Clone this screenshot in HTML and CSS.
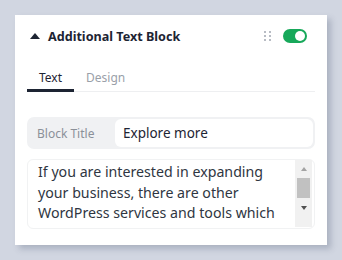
FILE: index.html
```html
<!DOCTYPE html>
<html lang="en">
<head>
  <meta charset="UTF-8">
  <title>Additional Text Block</title>
  <link rel="stylesheet" href="styles.css">
</head>
<body>

  <div class="panel">
    <!-- Cabecera del bloque -->
    <div class="panel-header">
      <span class="caret"></span>
      <h2 class="panel-title">Additional Text Block</h2>
      <span class="grip">
        <i></i><i></i><i></i><i></i><i></i><i></i>
      </span>
      <span class="toggle on"><span class="knob"></span></span>
    </div>

    <!-- Pestañas -->
    <div class="tabs">
      <span class="tab active">Text</span>
      <span class="tab">Design</span>
    </div>

    <!-- Campos -->
    <div class="field">
      <label class="field-label" for="block-title">Block Title</label>
      <input class="field-input" id="block-title" type="text" value="Explore more">
    </div>

    <div class="text-box">
      <div class="text-content">If you are interested in expanding your business, there are other WordPress services and tools which</div>
      <div class="scrollbar">
        <span class="arrow up"></span>
        <span class="thumb"></span>
        <span class="arrow down"></span>
      </div>
    </div>
  </div>

</body>
</html>
```

FILE: styles.css
```css
/* Estilos generales */
body {
  margin: 0;
  background-color: #d1d6e1;
  font-family: "Noto Sans", "Open Sans", sans-serif;
  padding: 15px;
}

.panel {
  width: 312px;
  height: 230px;
  box-sizing: border-box;
  background-color: #ffffff;
  box-shadow: 4px 4px 6px rgba(60, 70, 100, 0.25);
  padding: 9px 12px 0 12px;
}

/* Cabecera */
.panel-header {
  display: flex;
  align-items: center;
  height: 24px;
  padding-left: 3px;
}

.caret {
  width: 0;
  height: 0;
  border-left: 5px solid transparent;
  border-right: 5px solid transparent;
  border-bottom: 6px solid #1d2433;
  margin-right: 8px;
}

.panel-title {
  margin: 0;
  font-size: 12.6px;
  font-weight: 700;
  color: #1d2433;
  flex: 1;
}

.grip {
  display: grid;
  grid-template-columns: 2px 2px;
  gap: 2px 3px;
  margin-right: 12px;
}

.grip i {
  width: 2px;
  height: 2px;
  background-color: #b8bcc4;
}

.toggle {
  width: 24px;
  height: 14px;
  border-radius: 7px;
  background-color: #cfd3da;
  display: flex;
  align-items: center;
  padding: 2px;
  box-sizing: border-box;
  margin-right: 8px;
}

.toggle.on {
  background-color: #17a85a;
  justify-content: flex-end;
}

.knob {
  width: 10px;
  height: 10px;
  border-radius: 50%;
  background-color: #ffffff;
}

/* Pestañas */
.tabs {
  display: flex;
  margin-top: 21px;
  border-bottom: 1px solid #eeeff1;
}

.tab {
  padding: 0 12px 3px 12px;
  font-size: 12px;
  color: #9aa0a9;
  border-bottom: 3px solid transparent;
  margin-bottom: -1px;
}

.tab.active {
  color: #1d2433;
  border-bottom-color: #1d2433;
}

/* Campos */
.field {
  display: flex;
  margin-top: 25px;
  background-color: #f0f1f3;
  border: 2px solid #f0f1f3;
  border-radius: 7px;
  height: 32px;
  box-sizing: border-box;
}

.field-label {
  width: 78px;
  padding-left: 8px;
  display: flex;
  align-items: center;
  font-size: 12px;
  color: #8b9099;
}

.field-input {
  flex: 1;
  min-width: 0;
  border: none;
  border-radius: 6px;
  background-color: #ffffff;
  padding: 0 8px;
  font-family: inherit;
  font-size: 13.5px;
  color: #1d2433;
  outline: none;
}

/* Texto con barra de desplazamiento */
.text-box {
  display: flex;
  height: 70px;
  box-sizing: border-box;
  margin-top: 10px;
  border: 1px solid #f1f2f3;
  border-radius: 6px;
  padding: 0 2px 1px 0;
}

.text-content {
  flex: 1;
  padding: 2px 6px 0 10px;
  font-size: 14.2px;
  line-height: 20.5px;
  color: #2f3642;
}

.scrollbar {
  width: 17px;
  background-color: #f1f1f1;
  display: flex;
  flex-direction: column;
  align-items: center;
  padding-bottom: 10px;
}

.arrow {
  width: 0;
  height: 0;
  border-left: 3.5px solid transparent;
  border-right: 3.5px solid transparent;
}

.arrow.up {
  border-bottom: 4px solid #a3a3a3;
  margin-top: 7px;
}

.thumb {
  width: 13px;
  height: 20px;
  background-color: #c1c1c1;
  margin-top: 7px;
}

.arrow.down {
  border-top: 4px solid #505050;
  margin-top: auto;
  margin-bottom: 7px;
}
```
